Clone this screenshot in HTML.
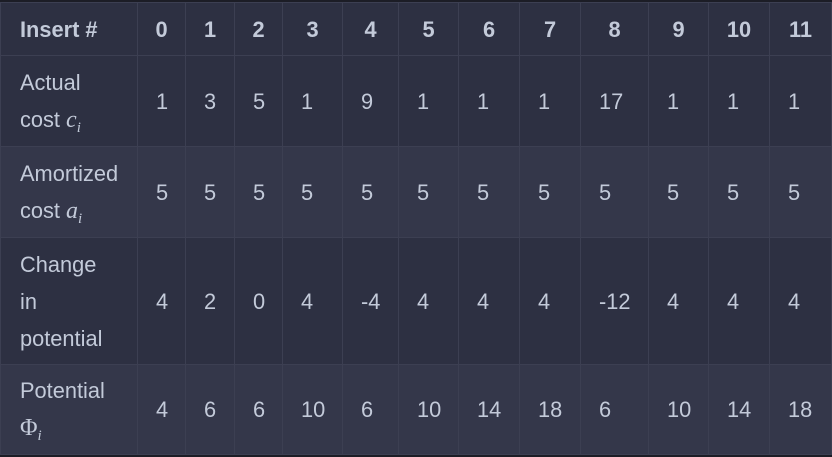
<!DOCTYPE html>
<html><head><meta charset="utf-8"><style>
html,body{margin:0;padding:0;background:#1c1d26;width:832px;height:457px;overflow:hidden}
table{position:absolute;left:0;top:2px;border-collapse:collapse;table-layout:fixed;width:831px;font-family:"Liberation Sans",sans-serif;font-size:21.8px;color:#c3cad9}
td,th{border:1px solid #3c3f52;vertical-align:middle;line-height:37px}
td{padding:0 0 0 18px;text-align:left}
th{padding:0;text-align:center;font-weight:bold;height:52px;background:#2d3042}
td:first-child,th:first-child{text-align:left;padding:0 0 0 19px}
tr.a td{background:#2d3042}
tr.b td{background:#34374a}
i{font-family:"Liberation Serif",serif;font-size:24px}
sub{font-size:15px;font-family:"Liberation Serif",serif;font-style:italic;vertical-align:-5px;line-height:0}
</style></head><body>
<table>
<colgroup><col style="width:137px"><col style="width:48px"><col style="width:49px"><col style="width:48px"><col style="width:60px"><col style="width:56px"><col style="width:60px"><col style="width:61px"><col style="width:61px"><col style="width:68px"><col style="width:60px"><col style="width:61px"><col style="width:62px"></colgroup>
<tr><th>Insert #</th><th>0</th><th>1</th><th>2</th><th>3</th><th>4</th><th>5</th><th>6</th><th>7</th><th>8</th><th>9</th><th>10</th><th>11</th></tr>
<tr class="a" style="height:91px"><td>Actual<br>cost <i>c</i><sub>i</sub></td><td>1</td><td>3</td><td>5</td><td>1</td><td>9</td><td>1</td><td>1</td><td>1</td><td>17</td><td>1</td><td>1</td><td>1</td></tr>
<tr class="b" style="height:91px"><td>Amortized<br>cost <i>a</i><sub>i</sub></td><td>5</td><td>5</td><td>5</td><td>5</td><td>5</td><td>5</td><td>5</td><td>5</td><td>5</td><td>5</td><td>5</td><td>5</td></tr>
<tr class="a" style="height:127px"><td>Change<br>in<br>potential</td><td>4</td><td>2</td><td>0</td><td>4</td><td>-4</td><td>4</td><td>4</td><td>4</td><td>-12</td><td>4</td><td>4</td><td>4</td></tr>
<tr class="b" style="height:90px"><td>Potential<br><span style="font-family:'Liberation Serif',serif;font-size:24px">Φ</span><sub>i</sub></td><td>4</td><td>6</td><td>6</td><td>10</td><td>6</td><td>10</td><td>14</td><td>18</td><td>6</td><td>10</td><td>14</td><td>18</td></tr>
</table>
</body></html>
